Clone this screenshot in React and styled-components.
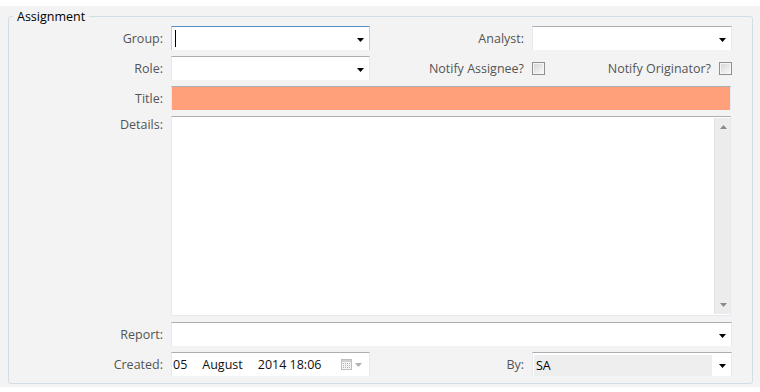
import React from 'react';
import styled, { createGlobalStyle, css } from 'styled-components';

const GlobalStyle = createGlobalStyle`
  html, body {
    margin:0;
    padding:0;
    background:#fff;
  }
  body {
    font-family:"Open Sans", "Noto Sans", sans-serif;
    font-size:12.5px;
  }
  * { box-sizing:border-box; }
`

const Page = styled.div`
  margin-top:6px;
  background:#f3f3f3;
  padding:2px 7px 3px 8px;
`

const Frame = styled.fieldset`
  margin:0;
  border:1px solid #d3dde4;
  border-radius:3px;
  padding:0 20px 7px 0;
  min-width:0;
`

const Legend = styled.legend`
  margin-left:4px;
  padding:0 4px;
  color:#000;
  font-size:12.5px;
  line-height:17px;
`

const Grid = styled.div`
  display:grid;
  grid-template-columns:162px 199px 162px 200px;
  grid-template-rows:24px 24px 24px 200px 24px 24px;
  row-gap:6px;
  margin-top:1px;
`

const Label = styled.label`
  justify-self:end;
  align-self:center;
  padding-right:8px;
  color:#555;
  white-space:nowrap;
  ${p => p.$top && css`
    align-self:start;
    padding-top:0;
  `}
`

const Box = styled.div`
  display:flex;
  align-items:center;
  background:#fff;
  border:1px solid #e3e9ef;
  border-top-color:#abadb3;
  border-bottom:none;
  min-width:0;
  ${p => p.$span && css`grid-column:2 / 5;`}
  ${p => p.$focus && css`
    border-color:#b7d1ea;
    border-top-color:#5a8fc4;
  `}
  ${p => p.$alert && css`
    background:#ffa07a;
    margin-right:1px;
  `}
`

const Text = styled.div`
  flex:1;
  align-self:stretch;
  display:flex;
  align-items:center;
  padding-left:2px;
  color:#000;
  ${p => p.$readonly && css`
    background:#eeeeee;
    margin:2px 0 0 1px;
  `}
`

const Caret = styled.span`
  width:1px;
  height:17px;
  background:#000;
  margin-left:1px;
`

const ArrowWrap = styled.span`
  display:flex;
  width:19px;
  justify-content:center;
  padding-top:3px;
  padding-left:1px;
`

const Area = styled(Box)`
  align-items:stretch;
  border-bottom:1px solid #e3e9ef;
  margin-right:1px;
`

const Scroll = styled.div`
  width:16px;
  margin:1px 0;
  background:#ececec;
  border-left:1px solid #e2e2e2;
  display:flex;
  flex-direction:column;
  justify-content:space-between;
  align-items:center;
  padding:7px 0 7px 1px;
`

const Check = styled.span`
  display:inline-block;
  width:13px;
  height:13px;
  border:1px solid #8e8f8f;
  background:linear-gradient(135deg, #d4d4d4, #fbfbfb);
  box-shadow:inset 0 0 0 1px #f6f6f6;
`

const NotifyCell = styled.div`
  display:flex;
  align-items:center;
  justify-content:space-between;
`

const Inline = styled.span`
  display:flex;
  align-items:center;
  gap:8px;
  color:#555;
`

const DatePart = styled.span`
  color:#111;
  margin-left:${p => p.$gap || 0}px;
`

const DateTools = styled.span`
  display:flex;
  align-items:center;
  gap:3px;
  margin-left:auto;
  margin-right:7px;
`

const Arrow = ({ color = '#000' }) => (
  <svg width="7" height="4" viewBox="0 0 7 4">
    <path d="M0 0h7L3.5 4z" fill={color} />
  </svg>
)

const UpArrow = () => (
  <svg width="7" height="4" viewBox="0 0 7 4">
    <path d="M3.5 0L7 4H0z" fill="#8a8a8a" />
  </svg>
)

const Calendar = () => (
  <svg width="11" height="11" viewBox="0 0 11 11">
    <rect x="0.5" y="0.5" width="10" height="10" fill="#f4f4f4" stroke="#bdbdbd" />
    <rect x="1" y="1" width="9" height="2" fill="#d0d0d0" />
    {[4, 6, 8].map(y => [2, 4, 6, 8].map(x => (
      <rect key={x + '-' + y} x={x} y={y} width="1" height="1" fill="#b0b0b0" />
    )))}
  </svg>
)

const Combo = ({ focus, children, readonly }) => (
  <Box $focus={focus}>
    <Text $readonly={readonly}>{children}</Text>
    <ArrowWrap><Arrow /></ArrowWrap>
  </Box>
)

const App = () => {
  return (
    <Page>
      <GlobalStyle />
      <Frame>
        <Legend>Assignment</Legend>
        <Grid>
          <Label>Group:</Label>
          <Combo focus><Caret /></Combo>
          <Label>Analyst:</Label>
          <Combo />

          <Label>Role:</Label>
          <Combo />
          <Label>Notify Assignee?</Label>
          <NotifyCell>
            <Check />
            <Inline>Notify Originator?<Check /></Inline>
          </NotifyCell>

          <Label>Title:</Label>
          <Box $span $alert />

          <Label $top>Details:</Label>
          <Area $span>
            <Text />
            <Scroll>
              <UpArrow />
              <Arrow color="#8a8a8a" />
            </Scroll>
          </Area>

          <Label>Report:</Label>
          <Box $span>
            <Text />
            <ArrowWrap><Arrow /></ArrowWrap>
          </Box>

          <Label>Created:</Label>
          <Box>
            <DatePart $gap={1}>05</DatePart>
            <DatePart $gap={15}>August</DatePart>
            <DatePart $gap={15}>2014 18:06</DatePart>
            <DateTools>
              <Calendar />
              <Arrow color="#b0b0b0" />
            </DateTools>
          </Box>
          <Label>By:</Label>
          <Combo readonly>SA</Combo>
        </Grid>
      </Frame>
    </Page>
  );
};

export default App;
